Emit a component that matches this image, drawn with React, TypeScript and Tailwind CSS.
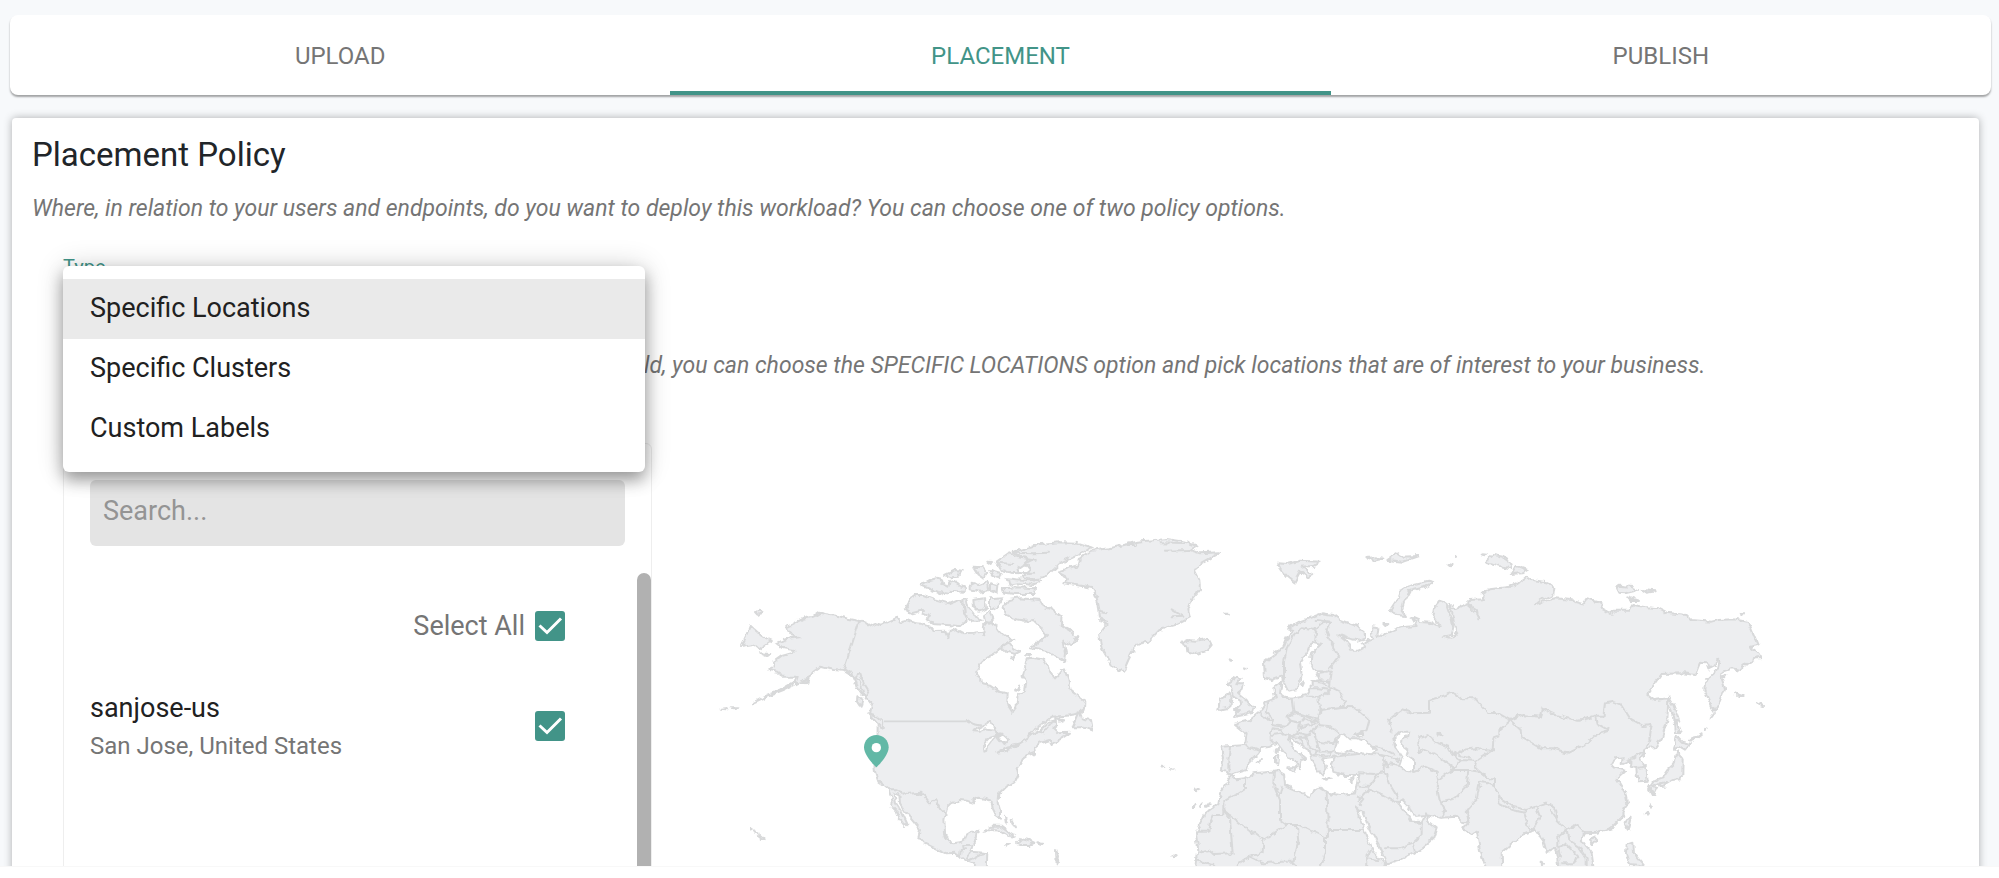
import React from "react";

const tabs = ["UPLOAD", "PLACEMENT", "PUBLISH"];
const policyTypes = ["Specific Locations", "Specific Clusters", "Custom Labels"];

const americas = [
  // mainland
  "M257 322L275 314L310 296L345 288L360 278L376 282L420 290L445 296L478 303L495 308L512 318L530 310L545 315L570 303L592 293L600 305L620 300L645 310L665 311L690 320L700 333L735 332L744 352L750 332L765 327L790 340L820 338L848 335L850 346L852 318L862 305L880 308L895 330L910 345L940 360L915 370L900 385L880 402L862 410L845 425L830 450L828 467L840 475L843 492L870 497L895 515L923 520L922 550L938 575L950 560L952 528L975 510L979 485L968 470L975 440L980 415L1000 413L1025 418L1045 430L1050 455L1065 475L1080 460L1092 445L1105 480L1112 512L1130 525L1156 545L1155 570L1130 582L1100 587L1055 590L1025 615L1000 630L985 650L1020 632L1050 605L1070 600L1072 615L1060 625L1075 640L1110 638L1085 655L1055 672L1048 660L1020 668L1005 680L1008 697L985 705L970 715L958 735L950 745L955 765L945 785L920 800L895 825L893 845L900 870L900 893L888 885L878 865L875 842L860 838L835 833L820 840L825 850L800 842L780 840L755 850L740 865L733 900L735 940L745 965L760 970L790 965L798 945L815 935L833 935L830 955L818 975L812 995L835 997L862 1000L860 1050L840 1050L820 1030L790 1018L765 998L740 1000L700 982L670 968L655 950L660 930L640 905L615 875L600 850L598 824L583 820L588 850L605 875L622 912L615 918L598 895L590 875L575 860L578 845L565 808L550 795L535 785L525 755L522 725L532 690L533 615L510 583L515 555L490 520L475 500L460 470L430 452L400 450L360 440L340 455L325 475L290 490L250 510L200 530L155 550L200 525L240 510L285 485L290 470L245 470L235 455L205 450L225 440L222 425L245 408L275 400L283 390L245 383L230 370L255 358L298 352L275 345Z",
  // eastern tip of Siberia
  "M150 316L165 330L188 350L215 362L200 372L178 388L160 372L123 378L138 348Z",
  "M165 276L178 272L188 280L172 284Z",
  "M182 400L208 402L200 408Z",
  "M62 566L80 564L82 568Z",
  "M95 562L112 562L105 565Z",
  "M300 492L325 478L322 488Z",
  // Pacific coast islands
  "M462 470L480 458L492 490L508 515L500 530L485 520L470 500Z",
  "M475 535L488 535L482 560L474 548Z",
  "M505 580L525 585L550 605L548 625L530 608Z",
  // arctic islands
  "M615 268L640 225L670 225L705 238L745 250L770 240L790 248L788 275L800 300L780 318L740 315L700 312L680 298L690 290L668 280L672 270L635 280Z",
  "M662 195L690 180L720 172L728 195L745 200L750 180L775 195L800 205L790 215L750 212L735 225L700 212Z",
  "M732 165L765 150L785 152L775 170L755 172Z",
  "M812 188L835 195L860 185L865 210L840 215L812 208Z",
  "M820 140L850 142L862 158L850 172L832 160Z",
  "M870 150L905 160L900 172L880 165Z",
  "M862 125L876 126L872 132Z",
  "M870 190L892 195L890 220L870 212Z",
  "M890 125L925 100L955 112L985 118L970 135L955 145L960 160L930 158L905 150Z",
  "M935 97L980 85L1020 72L1080 67L1130 68L1175 82L1150 98L1120 112L1080 130L1060 150L1030 175L1000 178L965 170L990 150L975 130L1000 118L965 112Z",
  "M940 98L1000 100L1050 98M985 118L1010 122M895 128L940 132M960 160L1000 158",
  "M920 175L950 178L1010 182L1025 185L1000 195L955 190L925 195Z",
  "M908 205L950 202L1008 205L1005 222L950 222L912 218Z",
  "M790 240L800 238L805 262L820 280L835 290L845 305L820 305L795 285Z",
  "M820 240L855 235L858 265L838 275L822 260Z",
  "M870 235L910 232L890 260L870 272Z",
  "M852 285L870 275L880 295L868 308L855 305Z",
  "M910 260L925 240L960 235L1020 240L1030 258L1060 270L1085 290L1082 315L1110 330L1132 352L1110 378L1090 362L1098 400L1095 425L1065 410L1040 392L990 385L1010 372L1038 345L1020 320L1000 300L975 302L935 295L915 285Z",
  "M905 380L925 368L940 385L960 395L945 402L920 395Z",
  "M930 415L945 408L940 420Z",
  "M945 510L958 500L952 512Z",
  "M978 402L992 402L985 405Z",
  // Newfoundland
  "M1140 572L1145 595L1170 600L1176 632L1150 622L1118 622L1128 600Z",
  "M1068 594L1090 598L1080 602Z",
  // Caribbean
  "M853 932L875 920L905 920L930 938L950 950L925 948L900 932L870 930Z",
  "M948 972L965 955L985 960L1003 968L985 975L962 975Z",
  "M912 972L930 972L920 977Z",
  "M1015 970L1030 972L1018 975Z",
  "M915 890L922 905L918 908Z",
  "M935 900L948 925L944 920Z",
  "M1068 990L1074 1005L1070 1030Z",
  // Hawaii
  "M180 945L194 958L183 963Z",
  "M165 934L176 940L168 938Z",
  "M149 929L155 930L150 932Z",
];

const eurasia = [
  // Greenland
  "M-60 118L-25 92L30 85L85 72L110 65L200 57L255 65L290 78L270 90L300 100L360 97L300 130L285 155L298 180L300 210L275 240L265 270L270 292L225 315L180 328L145 365L110 372L85 420L70 455L35 440L20 410L5 385L-3 345L20 315L0 290L-5 250L-20 205L-70 195L-110 190L-95 172L-128 155L-65 135Z",
  "M85 75L110 75M180 70L250 72M195 92L270 90M0 275L20 280M0 300L22 305M215 268L250 290L215 292",
  // Eurasia and Africa
  "M492 425L525 400L550 385L562 355L580 330L565 325L600 305L640 290L665 280L700 285L720 300L770 318L795 340L795 355L775 362L745 355L718 345L735 358L745 372L750 392L775 392L795 382L785 372L800 362L822 355L812 338L815 322L835 325L832 345L850 348L870 335L900 322L920 320L950 318L935 292L960 303L990 305L1022 322L1000 290L1005 262L1020 242L1040 255L1045 270L1055 300L1060 325L1055 345L1030 350L1055 357L1072 335L1062 310L1058 285L1048 250L1062 265L1075 262L1100 250L1130 268L1135 295L1125 275L1105 258L1105 240L1155 238L1145 222L1170 208L1230 200L1255 190L1280 170L1295 180L1340 187L1363 205L1360 225L1320 240L1305 253L1345 240L1365 235L1415 240L1450 250L1460 235L1490 243L1505 255L1512 270L1533 285L1540 272L1590 272L1600 255L1640 262L1675 265L1700 278L1760 285L1775 300L1835 305L1855 300L1900 298L1940 305L1950 320L1973 375L1950 380L1975 400L1985 415L1965 415L1940 432L1920 450L1895 445L1868 455L1865 475L1875 505L1860 545L1842 575L1830 545L1813 510L1815 485L1840 465L1855 440L1858 425L1850 415L1845 435L1825 445L1820 430L1800 428L1785 465L1750 460L1685 462L1665 490L1642 522L1665 540L1705 535L1702 600L1685 655L1665 682L1640 685L1618 720L1640 750L1643 785L1615 787L1612 745L1592 740L1595 718L1565 732L1568 712L1550 715L1528 735L1550 745L1575 752L1550 775L1575 815L1582 850L1565 895L1540 920L1490 938L1455 940L1445 960L1475 1000L1482 1050L1380 1050L1372 1000L1365 985L1340 998L1330 960L1305 925L1290 935L1265 945L1205 1000L1207 1050L1160 1050L1140 990L1130 935L1115 945L1090 925L1105 908L1085 905L1070 890L1020 893L975 885L945 888L925 860L905 840L895 850L920 880L935 905L965 905L978 880L985 905L1010 925L1000 955L965 985L940 1000L900 1020L860 1033L855 1020L835 975L805 920L790 880L768 862L785 905L800 950L820 995L855 1033L862 1050L288 1050L295 990L288 940L315 880L355 850L360 820L395 765L410 778L435 775L460 760L540 753L552 760L555 795L600 815L630 832L640 810L660 803L685 818L720 825L768 820L778 765L735 765L700 755L695 735L705 712L690 712L665 715L680 745L665 765L650 745L635 720L625 690L600 675L565 650L575 680L618 718L605 720L600 745L585 725L550 695L530 668L510 680L480 685L475 700L445 730L440 750L400 762L365 752L372 710L365 680L435 675L440 640L405 612L450 600L480 575L500 545L525 535L520 505L545 485L540 520L555 530L575 533L620 525L635 500L635 485L660 480L650 460L695 452L640 450L632 430L635 400L660 375L635 368L625 395L600 430L605 465L590 510L565 515L550 485L545 470L515 480L495 475Z",
  // Iceland
  "M240 370L262 360L290 362L325 355L335 375L320 392L290 402L262 395L260 380Z",
  // British Isles
  "M380 490L410 470L422 475L412 490L432 490L428 510L415 520L440 540L450 555L465 560L460 575L430 582L402 588L420 570L405 570L420 555L418 540L398 525L392 500Z",
  "M355 570L360 535L385 520L395 530L392 555L380 565Z",
  // Svalbard
  "M532 130L560 132L600 122L660 125L640 138L605 140L640 165L625 172L600 155L583 187L565 172L545 150Z",
  "M802 114L830 112L848 116L822 122Z",
  "M862 120L890 100L905 110L958 108L910 125L885 122Z",
  // Novaya Zemlya
  "M870 270L890 240L900 215L930 195L985 182L1000 186L975 200L930 212L912 245L905 270L918 288L890 285Z",
  "M850 312L862 312L856 318Z",
  // Severnaya Zemlya
  "M1158 125L1180 105L1205 110L1235 130L1230 145L1200 138Z",
  "M1235 162L1250 138L1283 150L1265 160Z",
  "M1148 103L1160 104L1155 106Z",
  "M1045 132L1058 135L1050 136Z",
  "M1065 108L1070 109L1067 111Z",
  // New Siberian Islands
  "M1548 205L1560 197L1600 202L1617 210L1575 220L1555 218Z",
  "M1628 210L1667 214L1640 218Z",
  "M1585 232L1617 243L1595 243Z",
  "M1922 280L1932 280L1926 287Z",
  // Sakhalin, Kurils, Aleutians
  "M1705 530L1720 555L1738 605L1728 603L1742 640L1728 638L1722 590L1708 560Z",
  "M1832 595L1842 582L1836 590Z",
  "M1770 662L1790 652L1805 640L1788 650Z",
  "M1815 630L1820 625L1818 630Z",
  "M1905 520L1928 528L1915 528Z",
  "M1977 550L1992 558L1982 556Z",
  "M1868 470L1876 466L1872 472Z",
  // Japan
  "M1730 650L1745 665L1770 672L1755 692L1735 680L1722 690Z",
  "M1732 695L1748 715L1747 765L1742 778L1715 780L1690 795L1680 790L1650 800L1665 780L1690 772L1705 750L1722 735Z",
  "M1645 798L1672 800L1660 825L1652 810Z",
  "M1680 790L1700 786L1692 800L1682 800Z",
  "M1652 855L1656 858L1650 860Z",
  "M1640 878L1644 880L1641 884Z",
  // Taiwan, Hainan, Luzon
  "M1585 895L1592 893L1583 932L1574 910Z",
  "M1470 962L1480 948L1490 960L1478 972Z",
  "M1580 975L1600 968L1602 1000L1618 1020L1635 1040L1590 1035L1578 1000Z",
  "M1325 1022L1329 1030L1326 1036Z",
  // Mediterranean islands
  "M525 708L538 708L535 732L525 728Z",
  "M528 685L534 683L533 700L527 698Z",
  "M562 742L590 742L585 755Z",
  "M668 774L692 776L675 779Z",
  "M748 778L765 772L758 784Z",
  "M470 725L486 720L478 728Z",
  "M604 490L612 484L608 495Z",
  // Atlantic islands
  "M184 737L190 738L186 740Z",
  "M210 744L218 746L212 746Z",
  "M288 805L296 806L291 808Z",
  "M300 860L304 850L302 862Z",
  "M318 860L326 850L320 860Z",
  "M278 862L284 852L282 864Z",
  "M217 1008L224 1012L220 1012Z",
  "M376 281L384 281L380 283Z",
  "M386 418L394 422L388 422Z",
  "M432 448L438 449L434 451Z",
];

const lakes = [
  // Black, Azov, Caspian and Aral seas
  "M705 690L712 655L732 640L748 655L770 655L800 665L828 692L815 703L780 700L755 690L730 702L708 698Z",
  "M762 645L788 635L785 648Z",
  "M880 655L905 632L928 632L925 648L908 655L905 675L925 690L920 705L942 720L942 755L915 752L900 740L908 715L885 680Z",
  "M1015 642L1021 638L1025 645L1018 648Z",
];

const greatLakes = [
  "M820 634L850 618L865 607L885 618L885 632L855 628L840 635Z",
  "M853 695L852 668L868 650L900 640L880 655L865 675L862 692Z",
  "M890 650L905 640L925 658L910 675L902 665Z",
  "M892 698L915 685L938 680L920 692Z",
  "M935 675L968 668L955 675Z",
];

const americasBorders = [
  "M478 303L432 448L455 462L478 480L490 520",
  "M800 600L820 612L850 618M885 625L895 645M938 682L968 665L985 655L1010 632L1030 640L1055 610",
  "M565 808L590 808L620 822L658 818L675 830L690 850L705 840L722 870L740 885",
  "M780 1010L782 990L795 990L792 975L812 975M812 995L800 1015L810 1020L840 1005L862 1000",
];

const eurasiaBorders = [
  // Scandinavia and Baltics
  "M552 480L552 425L560 385L580 345L605 325L640 330L650 345L648 370M640 330L665 310L690 305L680 335L700 380L718 410L690 445",
  "M690 305L650 300M695 452L690 500L720 515L735 545L725 560L765 562L808 600L800 630L785 640",
  "M660 480L690 485M635 505L660 505L690 510M620 530L670 530L690 510M655 535L662 570L725 560M635 485L665 488L690 500",
  // Central Europe
  "M575 533L580 575L560 588L572 602L555 620L515 615L520 600L500 580L505 545M480 575L505 600L520 600M580 575L625 590L655 600L662 570",
  "M560 588L590 580L612 595L600 608L572 602M612 595L650 605M600 608L598 622L635 615L650 605L655 612M510 640L515 625L545 628L550 640L515 645L515 670M550 640L570 650L595 638L598 622",
  "M595 638L620 645L640 635L650 615L690 618L715 640M640 635L650 665L700 670L710 655M650 665L658 695L700 692M572 648L600 650L620 650L625 675M600 655L608 675M625 680L650 690L645 710L630 705M650 710L685 705L700 690M437 675L475 690M390 682L385 720L385 750",
  // Turkey and Caucasus
  "M700 710L740 705L800 700L840 705L852 710L855 755L825 762L778 760M820 680L860 690L880 700M840 705L870 710L898 720M855 720L865 745M852 735L870 730L900 735",
  // Middle East
  "M778 800L808 800L835 765M855 755L870 795L895 835M808 805L850 825L885 845L895 845M778 840L808 805M772 830L790 840L778 855M965 910L965 945L938 970L900 985L855 985M938 970L945 995M935 905L965 910",
  // North Africa
  "M435 775L435 805L405 825L370 845L370 885L340 885L330 905L325 935L290 935M370 870L480 955L490 960L560 915L540 900L540 840L520 790L522 755M545 800L538 830M560 915L598 915L675 952L675 1000L660 1040M680 818L684 950L675 952M684 930L795 930",
  "M370 870L390 895L398 1000L340 1002L325 990L298 995M490 960L488 998L450 1010L415 1030L405 1045M450 1010L490 1030L540 1025L580 1025L595 965L590 915M580 1025L600 1045M798 1045L800 1005L812 985M800 1015L835 1020M288 1020L340 1035",
  // Kazakhstan and Central Asia
  "M875 635L865 600L905 570L940 580L990 578L990 540L1060 518L1085 535L1125 535L1165 578L1195 580L1230 600L1195 630L1195 650L1180 655L1178 690L1130 722L1125 740L1165 775L1185 775L1185 800L1165 790",
  "M955 700L955 655L985 645L1005 665L1045 680L1065 708L1085 690L1130 685L1178 690M955 700L975 690L1000 700L1065 745L1040 760M940 755L975 740L1010 755L1015 780L1040 760L1065 750L1105 750L1100 800L1065 835L1020 845L1010 800L1015 780M1020 845L1035 870L1025 893",
  "M1065 745L1080 720L1125 722M1080 705L1110 712M1105 750L1140 755L1165 775M1165 790L1140 785L1130 835L1100 870L1105 905M1065 710L1080 720",
  // Mongolia and China
  "M1230 600L1265 585L1320 590L1325 565L1365 585L1435 602L1485 590L1490 610L1528 632L1485 645L1460 670L1405 698L1360 685L1325 685L1265 650L1262 630L1230 600M1485 590L1510 590L1515 550L1540 545L1565 555L1590 595L1630 618L1655 615L1650 650L1640 685L1600 715",
  "M1185 775L1185 800L1200 835L1240 860L1280 870L1340 848L1365 865L1370 900L1400 930L1430 915L1455 940M1195 835L1195 848L1235 870L1275 878L1280 870M1275 885L1285 930M1310 865L1320 890L1305 920M1370 900L1350 870M1400 930L1375 950L1375 985L1380 1010M1400 930L1405 960L1435 980L1460 1015L1460 1045M1375 985L1395 970L1435 1010L1420 1030L1385 1030M1612 745L1638 738",
];

function Shapes({ paths }: { paths: string[] }) {
  return (
    <>
      {paths.map((d) => (
        <path key={d} d={d} />
      ))}
    </>
  );
}

function WorldMap() {
  return (
    <svg
      viewBox="0 0 3600 1038"
      className="block w-full h-auto"
      role="img"
      aria-label="World map"
    >
      <defs>
        {/* breaks up the straight segments so they read as coastline */}
        <filter
          id="coast"
          filterUnits="userSpaceOnUse"
          x="0"
          y="0"
          width="3600"
          height="1060"
          colorInterpolationFilters="sRGB"
        >
          <feTurbulence type="fractalNoise" baseFrequency="0.05" numOctaves="2" seed="4" />
          <feDisplacementMap in="SourceGraphic" scale="18" xChannelSelector="R" yChannelSelector="G" />
        </filter>
      </defs>
      <g
        fill="#edeef0"
        stroke="#d8d9da"
        strokeWidth="6"
        strokeLinejoin="round"
        strokeLinecap="round"
        filter="url(#coast)"
      >
        <Shapes paths={americas} />
        <g fill="#fff">
          <Shapes paths={greatLakes} />
        </g>
        <g fill="none">
          <Shapes paths={americasBorders} />
        </g>
        <g transform="translate(1200 0)">
          <Shapes paths={eurasia} />
          <g fill="none">
            <Shapes paths={eurasiaBorders} />
          </g>
          <g fill="#fff">
            <Shapes paths={lakes} />
          </g>
        </g>
      </g>
      <path d="M552 604H800" stroke="#d8d9da" strokeWidth="5" />
      <path
        d="M529 645c-20 0-37 16-37 37 0 27 37 60 37 60s37-33 37-60c0-21-17-37-37-37z"
        fill="#62b8a6"
      />
      <circle cx="529" cy="683" r="14" fill="#fff" />
    </svg>
  );
}

function Checkbox({ id, label }: { id: string; label?: string }) {
  return (
    <span className="relative block size-[30px]">
      <input
        id={id}
        type="checkbox"
        defaultChecked
        aria-label={label}
        className="block size-[30px] appearance-none rounded-[3px] bg-[#429488]"
      />
      <svg viewBox="0 0 30 30" className="pointer-events-none absolute inset-0" aria-hidden="true">
        <path d="M4.500 14.500l7.500 7L26 7.500" fill="none" stroke="#fff" strokeWidth="3" />
      </svg>
    </span>
  );
}

export default function App() {
  return (
    <div className="h-screen flex flex-col overflow-hidden bg-[#f7f9fb] font-[Roboto,sans-serif] text-[#212121]">
      <div className="flex-1 min-h-0 overflow-hidden pt-[15px]">
        <nav
          role="tablist"
          className="ml-[10px] mr-2 grid grid-cols-3 h-20 rounded-lg bg-white shadow-[0_2px_2px_rgba(0,0,0,0.35)]"
        >
          {tabs.map((tab) => (
            <button
              key={tab}
              role="tab"
              aria-selected={tab === "PLACEMENT"}
              className={
                tab === "PLACEMENT"
                  ? "border-b-4 border-[#429488] pt-[5px] text-2xl text-[#429488]"
                  : "border-b-4 border-transparent pt-[5px] text-2xl text-[#757575]"
              }
            >
              {tab}
            </button>
          ))}
        </nav>

        <main className="mt-[23px] ml-3 mr-5 min-h-full rounded bg-white px-5 pt-[17px] shadow-[0_0_8px_rgba(0,0,0,0.3)]">
          <h1 className="text-[33px] leading-10 text-[#212529]">Placement Policy</h1>
          <p className="mt-[18px] text-[23px] leading-8 italic text-[#757575]">
            Where, in relation to your users and endpoints, do you want to deploy this workload?
            You can choose one of two policy options.
          </p>

          <div className="px-[31px]">
            <div className="relative mt-[30px]">
              <div id="type-label" className="text-xl leading-6 text-[#429488]">
                Type
              </div>
              <button
                aria-haspopup="listbox"
                aria-expanded="true"
                aria-labelledby="type-label"
                className="block h-12 w-[582px] border-b border-[#429488]"
              />
              <ul
                role="listbox"
                aria-labelledby="type-label"
                className="absolute top-[11px] left-0 z-10 w-[582px] rounded-md bg-white py-[13px] shadow-[0_8px_16px_rgba(0,0,0,0.35),0_0_28px_rgba(0,0,0,0.16)]"
              >
                {policyTypes.map((type, i) => (
                  <li
                    key={type}
                    role="option"
                    aria-selected={i === 0}
                    className="h-[60px] px-[27px] text-[27px] leading-[58px] aria-selected:bg-[#eaeaea]"
                  >
                    {type}
                  </li>
                ))}
              </ul>
            </div>

            <p className="mt-[23px] pl-[544px] text-[23px] leading-8 italic text-[#757575] whitespace-nowrap">
              world, you can choose the SPECIFIC LOCATIONS option and pick locations that are of
              interest to your business.
            </p>

            <div className="mt-[61px] flex">
              <section className="w-[589px] h-[640px] shrink-0 rounded-md border border-[#eeeeee] pt-9">
                <input
                  type="text"
                  placeholder="Search..."
                  aria-label="Search locations"
                  className="mx-[26px] block h-[66px] w-[535px] rounded-md bg-[#e4e4e4] px-[13px] pb-1 text-[27px] placeholder:text-[#949494]"
                />
                <div className="mt-[27px] flex">
                  <div className="flex-1 pl-[26px] pr-[72px] pt-[37px]">
                    <div className="flex items-center justify-end gap-[10px]">
                      <label htmlFor="all" className="text-[27px] leading-8 text-[#757575]">
                        Select All
                      </label>
                      <Checkbox id="all" />
                    </div>
                    <div className="mt-[46px] flex items-center justify-between">
                      <div>
                        <div className="text-[27px] leading-10">sanjose-us</div>
                        <div className="text-2xl leading-9 text-[#757575]">
                          San Jose, United States
                        </div>
                      </div>
                      <Checkbox id="sanjose" label="sanjose-us" />
                    </div>
                  </div>
                  <div className="h-[440px] w-[14px] rounded-full bg-[#b1b1b1]" />
                </div>
              </section>
              <div className="flex-1 min-w-0 ml-12 mr-7 pt-[77px]">
                <WorldMap />
              </div>
            </div>
          </div>
        </main>
      </div>
      <footer className="h-3 border-t border-[#f8f8f8] bg-white" />
    </div>
  );
}
